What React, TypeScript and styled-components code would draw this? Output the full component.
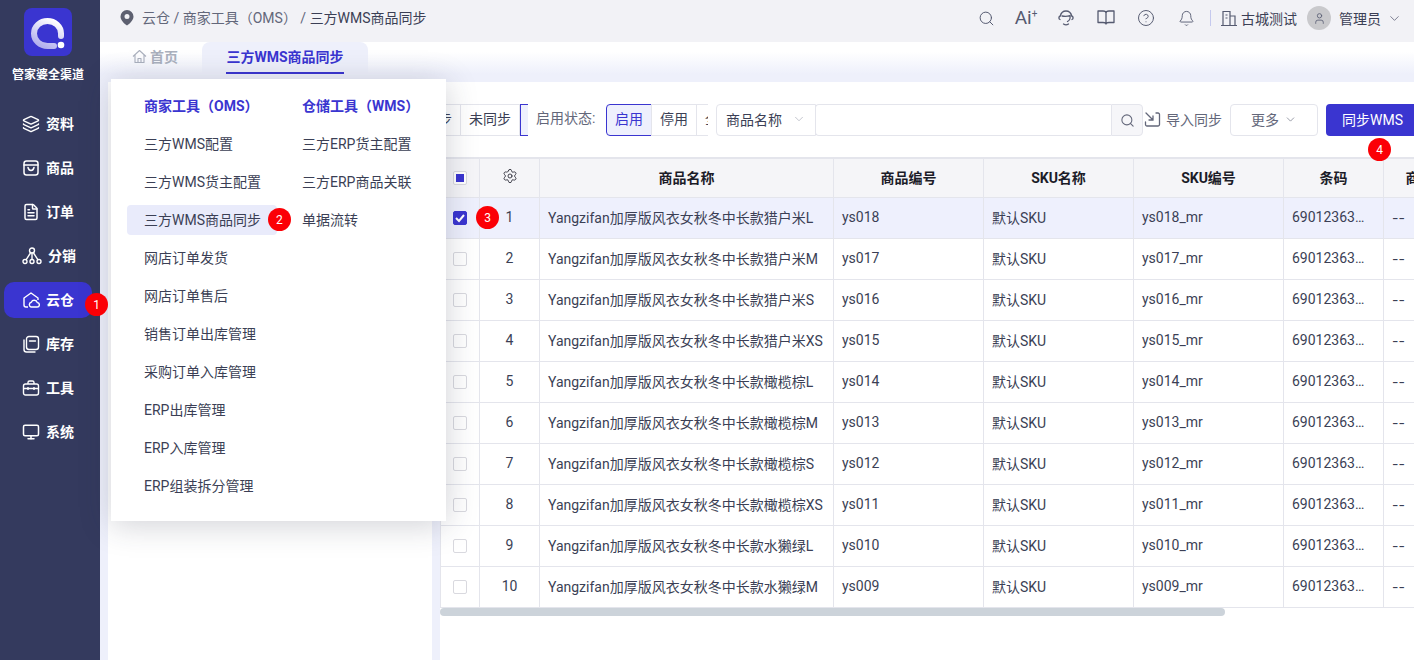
import React from 'react'
import styled, { createGlobalStyle } from 'styled-components'
import {
    Bell,
    ChevronDown,
    CircleHelp,
    FileText,
    Layers,
    Monitor,
    Search,
    Settings,
    User
} from 'lucide-react'

const GlobalStyle = createGlobalStyle`
    html, body {
        margin: 0;
        padding: 0;
        background: #fff;
    }
    * {
        box-sizing: border-box;
    }
    body {
        font-family: Roboto, "Noto Sans CJK SC", sans-serif;
        font-size: 14px;
        color: #3b3f55;
    }
`

const BLUE = '#3a35d0'
const LINE = '#e4e5ec'

const Page = styled.div`
    width: 1414px;
    height: 660px;
    display: flex;
    overflow: hidden;
`

const Sidebar = styled.aside`
    width: 100px;
    flex: none;
    background: #343a5e;
    display: flex;
    flex-direction: column;
    align-items: center;
    padding: 8px 4px 0 0;
`

const Logo = styled.div`
    width: 48px;
    height: 48px;
    border-radius: 8px;
    background: ${BLUE};
`

const Brand = styled.div`
    margin-top: 10px;
    height: 18px;
    line-height: 18px;
    font-size: 12px;
    font-weight: 700;
    color: #fff;
    white-space: nowrap;
`

const Nav = styled.nav`
    margin-top: 22px;
    display: flex;
    flex-direction: column;
    gap: 8px;
    width: 88px;
`

const NavItem = styled.div<{ $active?: boolean }>`
    position: relative;
    height: 36px;
    border-radius: 10px;
    background: ${p => (p.$active ? BLUE : 'transparent')};
    color: #fff;
    display: flex;
    align-items: center;
    gap: 6px;
    padding-left: 18px;
    font-size: 14px;
    font-weight: 700;
`

const NavLabel = styled.span`
    line-height: 36px;
    height: 36px;
`

const Badge = styled.span`
    position: absolute;
    width: 23px;
    height: 23px;
    border-radius: 50%;
    background: #fb0006;
    color: #fff;
    font-size: 12px;
    font-weight: 400;
    display: flex;
    align-items: center;
    justify-content: center;
    z-index: 5;
`

const NavBadge = styled(Badge)`
    right: -16px;
    bottom: 2px;
`

const Main = styled.div`
    flex: 1;
    min-width: 0;
    display: flex;
    flex-direction: column;
    background: #eef0fb;
    position: relative;
`

const TopBar = styled.header`
    height: 42px;
    flex: none;
    background: #f2f2f6;
    display: flex;
    align-items: center;
    padding: 0 12px 6px 20px;
`

const Crumbs = styled.div`
    flex: 1;
    display: flex;
    align-items: center;
    gap: 8px;
    font-size: 14px;
    line-height: 20px;
    color: #63677a;
    white-space: nowrap;
`

const CrumbLast = styled.span`
    color: #3b3f55;
`

const Tools = styled.div`
    display: flex;
    align-items: center;
    color: #555a70;
`

const ToolIcon = styled.div`
    width: 40px;
    height: 24px;
    display: flex;
    align-items: center;
    justify-content: center;
`

const AiMark = styled.span`
    font-size: 19px;
    line-height: 20px;
    color: #555a70;
`

const Sparkle = styled.sup`
    font-size: 10px;
    line-height: 0;
`

const Divider = styled.span`
    width: 1px;
    height: 16px;
    background: #c5c9ee;
    margin: 0 9px 0 4px;
`

const Company = styled.span`
    margin: 0 10px 0 3px;
    font-size: 14px;
    color: #3b3f55;
`

const Avatar = styled.span`
    width: 24px;
    height: 24px;
    border-radius: 50%;
    background: #c9c9cc;
    display: flex;
    align-items: center;
    justify-content: center;
    color: #555a70;
`

const UserName = styled.span`
    margin: 0 6px 0 8px;
    font-size: 14px;
    color: #3b3f55;
`

const TabRow = styled.div`
    height: 32px;
    flex: none;
    display: flex;
    padding-left: 32px;
    background: linear-gradient(#fff 30%, #eef0fb);
`

const HomeTab = styled.div`
    width: 70px;
    display: flex;
    align-items: center;
    gap: 3px;
    font-size: 14px;
    font-weight: 700;
    color: #aab0bd;
    padding-bottom: 4px;
`

const ActiveTab = styled.div`
    width: 166px;
    border-radius: 8px 8px 0 0;
    background: #eef0fb;
    display: flex;
    justify-content: center;
`

const ActiveTabLabel = styled.div`
    height: 32px;
    line-height: 30px;
    font-size: 14px;
    font-weight: 700;
    color: ${BLUE};
    border-bottom: 2px solid ${BLUE};
    white-space: nowrap;
`

const Body = styled.div`
    flex: 1;
    min-height: 0;
    display: flex;
    gap: 8px;
    padding: 8px 0 0 8px;
`

const LeftPanel = styled.section`
    width: 324px;
    flex: none;
    background: #fff;
`

const RightPanel = styled.section`
    flex: 1;
    min-width: 0;
    background: #fff;
    overflow: hidden;
    padding-top: 22px;
`

const Toolbar = styled.div`
    height: 32px;
    display: flex;
    align-items: center;
    white-space: nowrap;
`

const Clip = styled.div<{ $end?: boolean; $width: number }>`
    width: ${p => p.$width}px;
    height: 32px;
    flex: none;
    overflow: hidden;
    display: flex;
    justify-content: ${p => (p.$end ? 'flex-end' : 'flex-start')};
`

const Segment = styled.div<{ $active?: boolean; $round?: boolean }>`
    flex: none;
    height: 32px;
    line-height: 29px;
    padding: 0 8px;
    font-size: 14px;
    border: 1px solid ${p => (p.$active ? BLUE : LINE)};
    border-radius: ${p => (p.$round ? '4px 0 0 4px' : '0')};
    background: ${p => (p.$active ? '#eef0fd' : '#fff')};
    color: ${p => (p.$active ? BLUE : '#3b3f55')};
    margin-left: -1px;

    &:first-child {
        margin-left: 0;
    }
`

const SegmentStub = styled(Segment)`
    width: 8px;
    padding: 0;
    margin-left: 0;
    border-right: 0;
`

const FieldLabel = styled.span`
    width: 78px;
    flex: none;
    padding-left: 8px;
    font-size: 14px;
    color: #63677a;
    line-height: 28px;
    align-self: flex-start;
`

const SelectBox = styled.div`
    width: 100px;
    height: 32px;
    margin-left: 8px;
    padding: 0 9px 2px 9px;
    flex: none;
    display: flex;
    align-items: center;
    justify-content: space-between;
    border: 1px solid ${LINE};
    border-radius: 4px 0 0 4px;
    font-size: 14px;
    color: #3b3f55;
`

const SearchInput = styled.input`
    width: 296px;
    height: 32px;
    flex: none;
    margin-left: -1px;
    border: 1px solid ${LINE};
    border-right: 0;
    border-radius: 4px 0 0 4px;
    outline: none;
    background: #fff;
`

const SearchButton = styled.div`
    width: 32px;
    height: 32px;
    flex: none;
    display: flex;
    align-items: center;
    justify-content: center;
    background: #f6f6f9;
    border: 1px solid ${LINE};
    border-radius: 0 4px 4px 0;
    color: #63677a;
`

const ImportLink = styled.div`
    flex: none;
    margin-left: 1px;
    padding-bottom: 2px;
    display: flex;
    align-items: center;
    gap: 5px;
    font-size: 14px;
    color: #63677a;
`

const MoreButton = styled.div`
    width: 88px;
    height: 32px;
    margin-left: 8px;
    padding-bottom: 2px;
    flex: none;
    border: 1px solid ${LINE};
    border-radius: 4px;
    display: flex;
    align-items: center;
    justify-content: center;
    gap: 5px;
    font-size: 14px;
    color: #63677a;
`

const SyncButton = styled.div`
    position: relative;
    width: 100px;
    height: 32px;
    margin-left: 8px;
    flex: none;
    border-radius: 4px;
    background: ${BLUE};
    color: #fff;
    font-size: 14px;
    line-height: 32px;
    padding-left: 16px;
`

const SyncBadge = styled(Badge)`
    left: 42px;
    top: 34px;
`

const TableWrap = styled.div`
    margin-top: 21px;
`

const Table = styled.table`
    width: 1044px;
    table-layout: fixed;
    border-collapse: separate;
    border-spacing: 0;
    border-top: 2px solid ${LINE};
    border-left: 1px solid ${LINE};
`

const HeadCell = styled.th`
    height: 39px;
    padding: 0 8px 2px;
    background: #f5f5f8;
    border-right: 1px solid ${LINE};
    border-bottom: 1px solid ${LINE};
    font-size: 14px;
    font-weight: 700;
    color: #1c1c28;
    text-align: center;
    white-space: nowrap;
    overflow: hidden;
`

const Cell = styled.td<{ $center?: boolean; $selected?: boolean }>`
    position: relative;
    height: 41px;
    padding: 0 8px 2px;
    background: ${p => (p.$selected ? '#eef0fd' : '#fff')};
    border-right: 1px solid ${LINE};
    border-bottom: 1px solid ${LINE};
    font-size: 14px;
    color: #3b3f55;
    text-align: ${p => (p.$center ? 'center' : 'left')};
    white-space: nowrap;
    overflow: hidden;
    text-overflow: ellipsis;
`

const BadgeCell = styled(Cell)`
    overflow: visible;
`

const BarcodeCell = styled(Cell)`
    padding-right: 16px;
`

const DashCell = styled(Cell)`
    font-family: Inter, sans-serif;
`

const RowBadge = styled(Badge)`
    left: -4px;
    top: 8px;
`

const Check = styled.span<{ $checked?: boolean; $partial?: boolean }>`
    width: 14px;
    height: 14px;
    margin: 2px auto 0;
    border-radius: 2px;
    border: 1px solid ${p => (p.$checked ? BLUE : '#d9d9df')};
    background: ${p => (p.$checked ? BLUE : '#fff')};
    display: flex;
    align-items: center;
    justify-content: center;

    ${p =>
        p.$partial &&
        `&::after {
            content: '';
            width: 8px;
            height: 8px;
            background: ${BLUE};
        }`}
`

const ScrollThumb = styled.div<{ $width: number }>`
    width: ${p => p.$width}px;
    height: 8px;
    border-radius: 4px;
    background: #ccd3da;
`

const Menu = styled.div`
    position: absolute;
    left: 11px;
    top: 79px;
    width: 335px;
    height: 442px;
    background: #fff;
    box-shadow: 0 4px 30px rgba(40, 44, 70, 0.22);
    padding: 12px 0 0 16px;
    display: grid;
    grid-template-columns: 158px 160px;
    z-index: 4;
`

const MenuColumn = styled.div`
    display: flex;
    flex-direction: column;
    gap: 8px;
    align-items: flex-start;
`

const MenuTitle = styled.div`
    height: 30px;
    line-height: 30px;
    padding-left: 17px;
    font-size: 14px;
    font-weight: 700;
    color: ${BLUE};
    white-space: nowrap;
`

const MenuItem = styled.div<{ $active?: boolean }>`
    position: relative;
    height: 30px;
    line-height: 30px;
    padding: 0 16px 0 17px;
    border-radius: 4px;
    font-size: 14px;
    color: #3b3f55;
    white-space: nowrap;
    background: ${p => (p.$active ? '#e9ebfb' : 'transparent')};
`

const MenuBadge = styled(Badge)`
    right: -14px;
    top: 3px;
`

const BrandMark = () => (
    <svg width='48' height='48' viewBox='0 0 48 48' fill='none'>
        <defs>
            <linearGradient id='brandRing' x1='0.8' y1='0' x2='0.3' y2='1'>
                <stop offset='0' stopColor='#ffffff' />
                <stop offset='1' stopColor='#b4b1ee' />
            </linearGradient>
        </defs>
        <path
            d='M37 28v-2.500A13.500 12.500 0 1 0 23.500 38H30'
            stroke='url(#brandRing)'
            strokeWidth='6'
            strokeLinecap='round'
        />
        <circle cx='37' cy='37' r='3.300' fill='#fff' />
    </svg>
)

const BagIcon = () => (
    <svg width='18' height='18' viewBox='0 0 18 18' fill='none' stroke='currentColor' strokeWidth='1.5'>
        <rect x='2' y='2' width='14' height='14' rx='2.5' />
        <path d='M2 6h14M6 8.5c.5 2 1.5 3 3 3s2.500-1 3-3' strokeLinecap='round' />
    </svg>
)

const TreeIcon = () => (
    <svg width='20' height='18' viewBox='0 0 20 18' fill='none' stroke='currentColor' strokeWidth='1.4'>
        <circle cx='10' cy='3.500' r='2.500' />
        <circle cx='3' cy='14.500' r='2' />
        <circle cx='10' cy='14.500' r='2' />
        <circle cx='17' cy='14.500' r='2' />
        <path d='M10 6v6.500M8.500 6 4 12.800M11.500 6 16 12.800' />
    </svg>
)

const CloudHouseIcon = () => (
    <svg width='18' height='18' viewBox='0 0 18 18' fill='none' stroke='currentColor' strokeWidth='1.4'>
        <path d='M6 16H4a2 2 0 0 1-2-2V7l7-5 7 5v2' strokeLinejoin='round' />
        <path d='M9 16h6a2.200 2.200 0 0 0 .3-4.400 3.200 3.200 0 0 0-6-.4A2.500 2.500 0 0 0 9 16Z' strokeLinejoin='round' />
    </svg>
)

const StockIcon = () => (
    <svg width='18' height='18' viewBox='0 0 18 18' fill='none' stroke='currentColor' strokeWidth='1.4'>
        <path d='M2 5v9.500A2.500 2.500 0 0 0 4.500 17H13' strokeLinecap='round' />
        <rect x='4.500' y='1.500' width='12' height='13' rx='2.500' />
        <path d='M7.500 6h6' strokeLinecap='round' />
    </svg>
)

const ToolboxIcon = () => (
    <svg width='18' height='18' viewBox='0 0 18 18' fill='none' stroke='currentColor' strokeWidth='1.4'>
        <rect x='1.500' y='5' width='15' height='11' rx='2' />
        <path d='M6 5V3.500A1.500 1.500 0 0 1 7.500 2h3A1.500 1.500 0 0 1 12 3.500V5M1.500 9.500h15M6 8v3M12 8v3' />
    </svg>
)

const PinIcon = () => (
    <svg width='14' height='16' viewBox='0 0 14 16'>
        <path
            fillRule='evenodd'
            d='M7 0a6.500 6.500 0 0 1 6.500 6.500c0 3.800-4 7.500-6.500 9-2.500-1.500-6.500-5.200-6.500-9A6.500 6.500 0 0 1 7 0Zm0 4a2.500 2.500 0 1 0 0 5 2.500 2.500 0 0 0 0-5Z'
            fill='#5d6070'
        />
    </svg>
)

const HeadsetIcon = () => (
    <svg width='18' height='18' viewBox='0 0 18 18' fill='none' stroke='currentColor' strokeWidth='1.3'>
        <path d='M3 10.500c-1.500-.500-1.500-3 .3-3.500C4 4 6.300 2 9 2s5 2 5.700 5c1.800.500 1.800 3 .3 3.500' strokeLinecap='round' />
        <path d='M5 7c2.500.500 5.500.500 8-.500.500 2.500-.500 5-2.500 6M6.500 15c1.500 1 3.500 1 5 0' strokeLinecap='round' />
    </svg>
)

const BookIcon = () => (
    <svg width='18' height='16' viewBox='0 0 18 16' fill='none' stroke='currentColor' strokeWidth='1.3'>
        <path d='M1 1h5c1.700 0 3 .700 3 2v11c0-1-1.300-1.500-3-1.500H1ZM17 1h-5c-1.700 0-3 .700-3 2v11c0-1 1.300-1.500 3-1.500h5Z' strokeLinejoin='round' />
    </svg>
)

const BuildingIcon = () => (
    <svg width='18' height='18' viewBox='0 0 18 18' fill='none' stroke='currentColor' strokeWidth='1.2'>
        <path d='M1 16.500h16M3 16.500V2.500h7v14M10 7h5v9.500M5.500 6h2M5.500 9h2' />
    </svg>
)

const ImportIcon = () => (
    <svg width='17' height='17' viewBox='0 0 17 17' fill='none' stroke='currentColor' strokeWidth='1.3'>
        <path d='M12 2h2a1.500 1.500 0 0 1 1.500 1.500v10A1.500 1.500 0 0 1 14 15H3a1.500 1.500 0 0 1-1.500-1.500V11' strokeLinecap='round' />
        <path d='M2 2l7 7M9 5v4H5' strokeLinecap='round' />
    </svg>
)

const HomeIcon = () => (
    <svg width='15' height='15' viewBox='0 0 15 15' fill='none' stroke='currentColor' strokeWidth='1.1'>
        <path d='M1 7.500 7.500 1.500 14 7.500M3 6v7.500h9V6M6 13.500V9.500h3v4' strokeLinejoin='round' />
    </svg>
)

const CheckMark = () => (
    <svg width='10' height='10' viewBox='0 0 10 10' fill='none' stroke='#fff' strokeWidth='2'>
        <path d='M1 5l3 3 5-6' />
    </svg>
)

const navItems = [
    { label: '资料', icon: <Layers size={18} /> },
    { label: '商品', icon: <BagIcon /> },
    { label: '订单', icon: <FileText size={18} /> },
    { label: '分销', icon: <TreeIcon /> },
    { label: '云仓', icon: <CloudHouseIcon />, active: true },
    { label: '库存', icon: <StockIcon /> },
    { label: '工具', icon: <ToolboxIcon /> },
    { label: '系统', icon: <Monitor size={18} /> }
]

const oms = [
    '三方WMS配置',
    '三方WMS货主配置',
    '三方WMS商品同步',
    '网店订单发货',
    '网店订单售后',
    '销售订单出库管理',
    '采购订单入库管理',
    'ERP出库管理',
    'ERP入库管理',
    'ERP组装拆分管理'
]

const wms = ['三方ERP货主配置', '三方ERP商品关联', '单据流转']

const columns = [
    { title: '商品名称', width: 294 },
    { title: '商品编号', width: 150 },
    { title: 'SKU名称', width: 150 },
    { title: 'SKU编号', width: 150 },
    { title: '条码', width: 100 },
    { title: '商品规格', width: 100 }
]

const rows = [
    { name: '猎户米L', code: 'ys018' },
    { name: '猎户米M', code: 'ys017' },
    { name: '猎户米S', code: 'ys016' },
    { name: '猎户米XS', code: 'ys015' },
    { name: '橄榄棕L', code: 'ys014' },
    { name: '橄榄棕M', code: 'ys013' },
    { name: '橄榄棕S', code: 'ys012' },
    { name: '橄榄棕XS', code: 'ys011' },
    { name: '水獭绿L', code: 'ys010' },
    { name: '水獭绿M', code: 'ys009' }
]

const App = () => (
    <Page>
        <GlobalStyle />
        <Sidebar>
            <Logo>
                <BrandMark />
            </Logo>
            <Brand>管家婆全渠道</Brand>
            <Nav>
                {navItems.map(item => (
                    <NavItem key={item.label} $active={item.active}>
                        {item.icon}
                        <NavLabel>{item.label}</NavLabel>
                        {item.active && <NavBadge>1</NavBadge>}
                    </NavItem>
                ))}
            </Nav>
        </Sidebar>
        <Main>
            <TopBar>
                <Crumbs>
                    <PinIcon />
                    <span>
                        云仓 / 商家工具（OMS） / <CrumbLast>三方WMS商品同步</CrumbLast>
                    </span>
                </Crumbs>
                <Tools>
                    <ToolIcon>
                        <Search size={17} strokeWidth={1.4} />
                    </ToolIcon>
                    <ToolIcon>
                        <AiMark>
                            Ai<Sparkle>+</Sparkle>
                        </AiMark>
                    </ToolIcon>
                    <ToolIcon>
                        <HeadsetIcon />
                    </ToolIcon>
                    <ToolIcon>
                        <BookIcon />
                    </ToolIcon>
                    <ToolIcon>
                        <CircleHelp size={18} strokeWidth={1.3} />
                    </ToolIcon>
                    <ToolIcon>
                        <Bell size={17} strokeWidth={1.3} />
                    </ToolIcon>
                    <Divider />
                    <BuildingIcon />
                    <Company>古城测试</Company>
                    <Avatar>
                        <User size={13} strokeWidth={1.5} />
                    </Avatar>
                    <UserName>管理员</UserName>
                    <ChevronDown size={15} strokeWidth={1.2} />
                </Tools>
            </TopBar>
            <TabRow>
                <HomeTab>
                    <HomeIcon />
                    首页
                </HomeTab>
                <ActiveTab>
                    <ActiveTabLabel>三方WMS商品同步</ActiveTabLabel>
                </ActiveTab>
            </TabRow>
            <Body>
                <LeftPanel />
                <RightPanel>
                    <Toolbar>
                        <Clip $end $width={88}>
                            <Segment>已同步</Segment>
                            <Segment>未同步</Segment>
                            <SegmentStub $active />
                        </Clip>
                        <FieldLabel>启用状态:</FieldLabel>
                        <Clip $width={102}>
                            <Segment $active $round>
                                启用
                            </Segment>
                            <Segment>停用</Segment>
                            <Segment>全部</Segment>
                        </Clip>
                        <SelectBox>
                            商品名称
                            <ChevronDown size={14} strokeWidth={1} color='#9a9dab' />
                        </SelectBox>
                        <SearchInput />
                        <SearchButton>
                            <Search size={15} strokeWidth={1.7} />
                        </SearchButton>
                        <ImportLink>
                            <ImportIcon />
                            导入同步
                        </ImportLink>
                        <MoreButton>
                            更多
                            <ChevronDown size={13} strokeWidth={1.2} />
                        </MoreButton>
                        <SyncButton>
                            同步WMS
                            <SyncBadge>4</SyncBadge>
                        </SyncButton>
                    </Toolbar>
                    <TableWrap>
                        <Table>
                            <colgroup>
                                <col width={39} />
                                <col width={60} />
                                {columns.map(col => (
                                    <col key={col.title} width={col.width} />
                                ))}
                            </colgroup>
                            <thead>
                                <tr>
                                    <HeadCell>
                                        <Check $partial />
                                    </HeadCell>
                                    <HeadCell>
                                        <Settings size={16} strokeWidth={1.2} />
                                    </HeadCell>
                                    {columns.map(col => (
                                        <HeadCell key={col.title}>{col.title}</HeadCell>
                                    ))}
                                </tr>
                            </thead>
                            <tbody>
                                {rows.map((row, i) => {
                                    const selected = i === 0
                                    return (
                                        <tr key={row.code}>
                                            <Cell $center $selected={selected}>
                                                <Check $checked={selected}>{selected && <CheckMark />}</Check>
                                            </Cell>
                                            <BadgeCell $center $selected={selected}>
                                                {selected && <RowBadge>3</RowBadge>}
                                                {i + 1}
                                            </BadgeCell>
                                            <Cell $selected={selected}>Yangzifan加厚版风衣女秋冬中长款{row.name}</Cell>
                                            <Cell $selected={selected}>{row.code}</Cell>
                                            <Cell $selected={selected}>默认SKU</Cell>
                                            <Cell $selected={selected}>{row.code}_mr</Cell>
                                            <BarcodeCell $selected={selected}>6901236341XXX</BarcodeCell>
                                            <DashCell $selected={selected}>--</DashCell>
                                        </tr>
                                    )
                                })}
                            </tbody>
                        </Table>
                        <ScrollThumb $width={785} />
                    </TableWrap>
                </RightPanel>
            </Body>
            <Menu>
                <MenuColumn>
                    <MenuTitle>商家工具（OMS）</MenuTitle>
                    {oms.map(label => (
                        <MenuItem key={label} $active={label === '三方WMS商品同步'}>
                            {label}
                            {label === '三方WMS商品同步' && <MenuBadge>2</MenuBadge>}
                        </MenuItem>
                    ))}
                </MenuColumn>
                <MenuColumn>
                    <MenuTitle>仓储工具（WMS）</MenuTitle>
                    {wms.map(label => (
                        <MenuItem key={label}>{label}</MenuItem>
                    ))}
                </MenuColumn>
            </Menu>
        </Main>
    </Page>
)

export default App
